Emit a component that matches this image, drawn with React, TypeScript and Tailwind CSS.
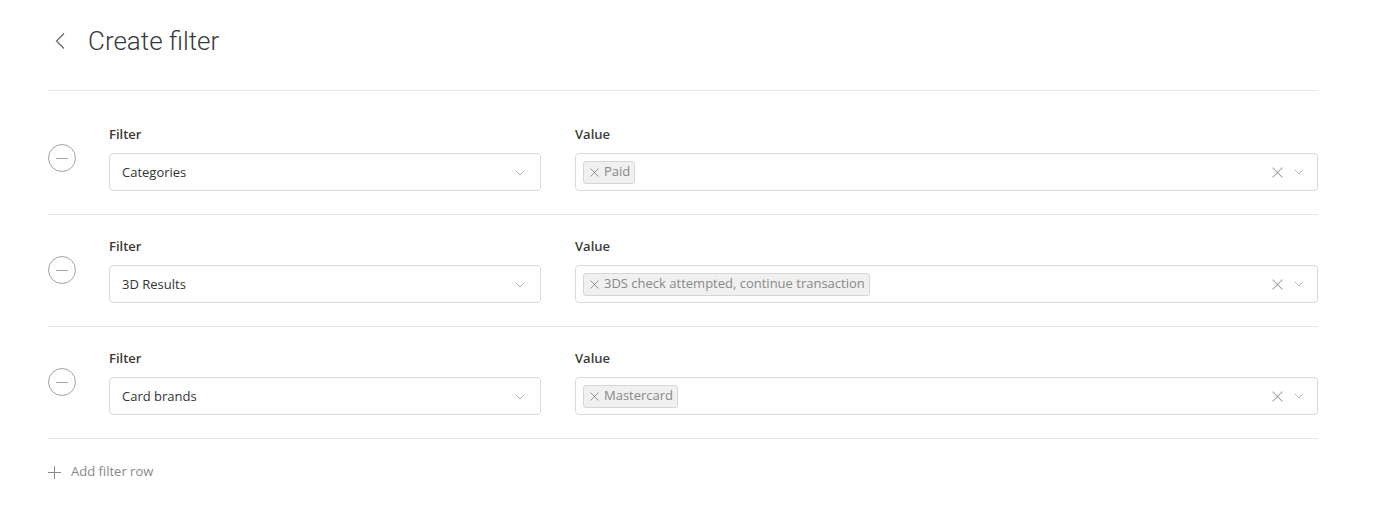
import React from "react";

const rows = [
  { filter: "Categories", value: "Paid" },
  { filter: "3D Results", value: "3DS check attempted, continue transaction" },
  { filter: "Card brands", value: "Mastercard" },
];

function Chevron({ className = "" }: { className?: string }) {
  return (
    <svg width="10" height="6" viewBox="0 0 10 6" className={className} fill="none">
      <path d="M1 1 L5 5 L9 1" stroke="#b5b5b5" strokeWidth="1" />
    </svg>
  );
}

function XIcon({ size = 8, color = "#8a8a8a" }: { size?: number; color?: string }) {
  return (
    <svg width={size} height={size} viewBox="0 0 10 10" fill="none">
      <path d="M0.5 0.5 L9.5 9.5 M9.5 0.5 L0.5 9.5" stroke={color} strokeWidth="1" />
    </svg>
  );
}

export default function App() {
  return (
    <div className="min-h-screen bg-white" style={{ fontFamily: '"Open Sans", sans-serif' }}>
      <div className="ml-[48px] w-[1270px]">
        <div className="flex h-[91px] items-start border-b border-[#e8e8e8] pt-[25px]">
          <div className="flex h-[32px] items-center">
            <svg width="16" height="18" viewBox="0 0 16 18" fill="none" className="ml-[5px]">
              <path d="M11 1.5 L3.5 9 L11 16.5" stroke="#6a6a6a" strokeWidth="1.3" />
            </svg>
            <h1
              className="ml-[19px] text-[26px] font-light leading-[32px] text-[#3a3a3a]"
              style={{ fontFamily: 'Roboto, sans-serif' }}
            >
              Create filter
            </h1>
          </div>
        </div>
        <div className="pt-[12px]">
          {rows.map((r) => (
            <div key={r.filter} className="flex items-center border-b border-[#e8e8e8] pt-[22px] pb-[23px]">
              <div className="flex h-[28px] w-[28px] items-center justify-center rounded-full border border-[#a3a3a3]">
                <div className="h-px w-[12px] bg-[#a3a3a3]" />
              </div>
              <div className="ml-[33px] w-[432px]">
                <div className="mb-[10px] text-[13px] font-semibold leading-[18px] text-[#3a3a3a]">Filter</div>
                <div className="flex h-[38px] items-center justify-between rounded-[4px] border border-[#d9d9d9] pl-[12px] pr-[15px] pt-[1px]">
                  <span className="text-[13px] text-[#333]">{r.filter}</span>
                  <Chevron />
                </div>
              </div>
              <div className="ml-[34px] flex-1">
                <div className="mb-[10px] text-[13px] font-semibold leading-[18px] text-[#3a3a3a]">Value</div>
                <div className="flex h-[38px] items-center justify-between rounded-[4px] border border-[#d9d9d9] pl-[7px] pr-[13px]">
                  <span className="flex h-[23px] items-center gap-[5px] rounded-[3px] border border-[#d6d6d6] bg-[#f0f0f0] pl-[6px] pr-[4px] text-[13px] text-[#888]">
                    <XIcon size={9} />
                    {r.value}
                  </span>
                  <div className="flex items-center gap-[11px]">
                    <XIcon size={11} color="#a8a8a8" />
                    <Chevron />
                  </div>
                </div>
              </div>
            </div>
          ))}
        </div>
        <div className="mt-[23px] flex h-[20px] items-center">
          <svg width="13" height="13" viewBox="0 0 13 13" fill="none">
            <path d="M6.5 0 V13 M0 6.5 H13" stroke="#8a8a8a" strokeWidth="1" />
          </svg>
          <span className="ml-[10px] text-[13px] text-[#888]">Add filter row</span>
        </div>
      </div>
    </div>
  );
}
